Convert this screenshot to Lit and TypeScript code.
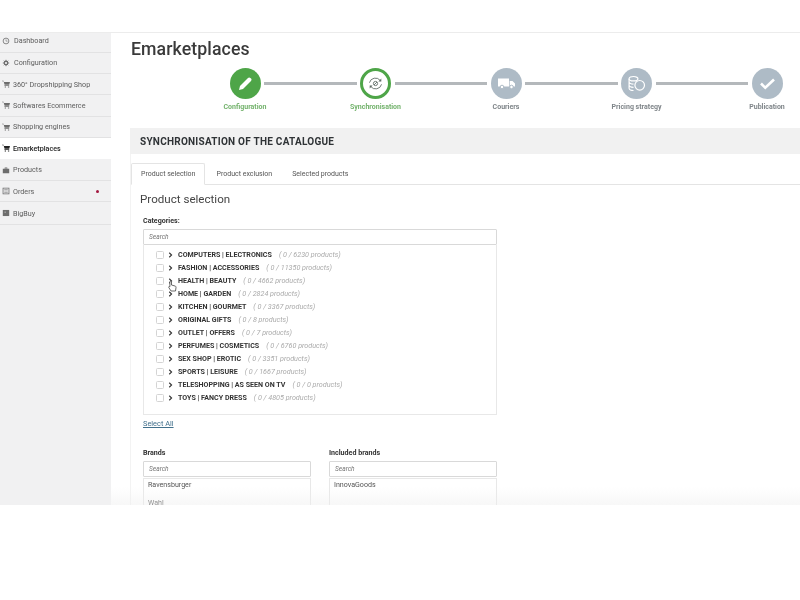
import { LitElement, html, css, svg } from "lit";
import { customElement } from "lit/decorators.js";

const cart = svg`<path d="M0 1h2l.6 1.400H10L9 6H3.200L2 1.600H0z M3 6.600h6v1H3z M3.400 8h1.600v1.400H3.400z M7.400 8H9v1.400H7.400z"/>`;
const navIcons: Record<string, unknown> = {
  clock: svg`<circle cx="5" cy="5" r="3.600" fill="none" stroke="currentColor" stroke-width="1"/><path d="M5 3v2.200h2" fill="none" stroke="currentColor" stroke-width=".7"/>`,
  gear: svg`<circle cx="5" cy="5" r="2.200" fill="none" stroke="currentColor" stroke-width="1.600"/><path d="M5 1v1.400M5 7.600V9M1 5h1.400M7.600 5H9M2.200 2.200l1 1M6.800 6.800l1 1M7.800 2.200l-1 1M3.200 6.800l-1 1" stroke="currentColor" stroke-width="1.100"/>`,
  cart,
  bag: svg`<path d="M1 3.400h8V9H1z M3.400 3.400V2h3.200v1.400h-.8v-.7H4.200v.7z"/>`,
  list: svg`<path fill-rule="evenodd" d="M.8 1h8.400v8H.8z M1.800 2v6h6.400V2z"/><path d="M2.800 3h4.400v.8H2.800z M2.800 4.600h4.400v.8H2.800z M2.800 6.200h4.400v.8H2.800z"/>`,
  box: svg`<path d="M1 1.200h8v7.600H1z"/><path d="M3 3h2v2H3z" fill="#999"/>`,
};

const nav: [string, string, boolean?, boolean?][] = [
  ["Dashboard", "clock"],
  ["Configuration", "gear"],
  ["360° Dropshipping Shop", "cart"],
  ["Softwares Ecommerce", "cart"],
  ["Shopping engines", "cart"],
  ["Emarketplaces", "cart", true],
  ["Products", "bag"],
  ["Orders", "list", false, true],
  ["BigBuy", "box"],
];

const steps: [string, string, unknown][] = [
  ["Configuration", "done", svg`<path d="M-6.500 6.500l1-4L2.500-5.500c.7-.7 1.700-.7 2.400 0l.6.600c.7.700.7 1.700 0 2.400L-2.500 5.500z" fill="#fff"/>`],
  ["Synchronisation", "current", svg`<g fill="none" stroke="#5f6b66" stroke-width="1.100"><path d="M-7.500-1A7.600 7.600 0 0 1 6-3.600M7.500 1A7.600 7.600 0 0 1-6 3.600"/><circle r="2.600"/><path d="M-1.800 1.800l3.600-3.600"/></g><path d="M7.200-6.200v3.600H3.600zM-7.200 6.200V2.600h3.600z" fill="#5f6b66"/>`],
  ["Couriers", "todo", svg`<path d="M-8.500-5H2.500v8h-11zM3.200-2.500h2.800L8.500 0v3H3.200z" fill="#fff"/><circle cx="-4.500" cy="3.500" r="1.800" fill="#fff" stroke="#aebbc6"/><circle cx="5" cy="3.500" r="1.800" fill="#fff" stroke="#aebbc6"/>`],
  ["Pricing strategy", "todo", svg`<g fill="none" stroke="#fff" stroke-width="1.200"><ellipse cx="-3" cy="-4.800" rx="4.400" ry="2.200"/><path d="M-7.400-4.800V4.800c0 1.200 2 2.200 4.400 2.200M-7.400-1.600c0 1.200 2 2.200 4.400 2.200M-7.400 1.600c0 1.200 2 2.200 4.400 2.200"/><circle cx="3.200" cy="1.800" r="4.800"/></g>`],
  ["Publication", "todo", svg`<path d="M-6.500 0l4.300 4.300L6.500-4" fill="none" stroke="#fff" stroke-width="2.600"/>`],
];

const cats: [string, string][] = [
  ["COMPUTERS | ELECTRONICS", "( 0 / 6230 products)"],
  ["FASHION | ACCESSORIES", "( 0 / 11350 products)"],
  ["HEALTH | BEAUTY", "( 0 / 4662 products)"],
  ["HOME | GARDEN", "( 0 / 2824 products)"],
  ["KITCHEN | GOURMET", "( 0 / 3367 products)"],
  ["ORIGINAL GIFTS", "( 0 / 8 products)"],
  ["OUTLET | OFFERS", "( 0 / 7 products)"],
  ["PERFUMES | COSMETICS", "( 0 / 6760 products)"],
  ["SEX SHOP | EROTIC", "( 0 / 3351 products)"],
  ["SPORTS | LEISURE", "( 0 / 1667 products)"],
  ["TELESHOPPING | AS SEEN ON TV", "( 0 / 0 products)"],
  ["TOYS | FANCY DRESS", "( 0 / 4805 products)"],
];

@customElement("app-root")
export class AppRoot extends LitElement {
  static styles = css`
    :host { display: block; width: 800px; height: 600px; background: #fff; font-family: Roboto, "Liberation Sans", sans-serif; color: #333; overflow: hidden; }
    .screen { position: relative; height: 505px; overflow: hidden; display: flex; flex-direction: column; background: #fff; filter: blur(.35px); }
    .top { height: 33px; flex: none; box-sizing: border-box; border-bottom: 1px solid #ececec; }
    .body { flex: 1; min-height: 0; display: flex; }
    .fade { position: absolute; left: 111px; right: 0; bottom: 0; height: 18px; background: linear-gradient(rgba(240,240,240,0), rgba(238,238,238,.45)); pointer-events: none; }
    .side { width: 111px; flex: none; background: #f1f1f2; }
    .nav { height: 21.400px; box-sizing: border-box; border-bottom: 1px solid #e2e2e3; display: flex; align-items: center; font-size: 7.200px; color: #5c5c5c; padding-left: 2px; gap: 3px; position: relative; }
    .nav:first-child { height: 19.500px; padding-bottom: 3px; }
    .nav:last-child { height: 22.800px; }
    .nav svg { width: 8px; height: 8px; fill: #6d6d6d; color: #6d6d6d; flex: none; }
    .nav.wide { gap: 4px; }
    .nav.on { background: #fff; color: #222; font-weight: 500; border-bottom-color: #fff; }
    .nav.on svg { fill: #222; }
    .dot { position: absolute; left: 96px; top: 9px; width: 3px; height: 3px; border-radius: 50%; background: #a3183f; }
    .main { flex: 1; min-width: 0; padding: 6px 0 0 19px; }
    h1 { margin: 0 0 0 1px; font-size: 17.700px; font-weight: 500; color: #3a3a3a; line-height: 20px; letter-spacing: .1px; }
    .stepper { display: flex; margin: 9px 0 0 99px; width: 554px; height: 50px; align-items: flex-start; }
    .step { width: 32px; flex: none; display: flex; flex-direction: column; align-items: center; }
    .circle { width: 31px; height: 31px; border-radius: 50%; box-sizing: border-box; display: block; flex: none; }
    .step.done .circle { background: #4ea548; }
    .step.current .circle { background: #fff; border: 3px solid #4ea548; }
    .step.todo .circle { background: #aebbc6; }
    .step svg { width: 100%; height: 100%; display: block; overflow: visible; }
    .lbl { font-size: 7px; font-weight: 700; margin-top: 4px; white-space: nowrap; color: #7f8589; }
    .done .lbl, .current .lbl { color: #74b36d; }
    .line { flex: 1; height: 2.500px; background: #b4b8bb; margin: 14px 3px 0; }
    .band { height: 26px; background: #f1f1f1; margin-top: 10px; display: flex; align-items: center; padding-left: 10px; font-size: 10px; font-weight: 700; color: #2f3336; letter-spacing: .25px; }
    .panel { border-left: 1px solid #f3f3f3; height: 400px; }
    .tabs { display: flex; height: 21px; padding-top: 9px; border-bottom: 1px solid #e4e4e4; font-size: 7px; color: #555; }
    .tab { display: flex; align-items: center; padding: 0 11px 0 0; margin-left: 11px; white-space: nowrap; }
    .tab.on { margin-left: 0; padding: 0 9px; border: 1px solid #e4e4e4; border-bottom: 1px solid #fff; height: 22px; border-radius: 2px 2px 0 0; background: #fff; box-sizing: border-box; }
    .tab.sec { margin-left: 9px; }
    h2 { margin: 7px 0 0 9px; font-size: 11.600px; font-weight: 400; line-height: 14px; color: #444; }
    .form { margin: 10px 0 0 12px; width: 354px; }
    label { display: block; font-size: 7.100px; font-weight: 700; color: #333; line-height: 10px; }
    .search { height: 16px; margin-top: 3px; box-sizing: border-box; border: 1px solid #d9d9d9; border-radius: 1px; font-size: 6.600px; font-style: italic; color: #777; padding-left: 5px; display: flex; align-items: center; background: #fff; }
    .tree { height: 170px; box-sizing: border-box; border: 1px solid #e8e8e8; border-top: 0; padding-top: 3px; }
    .row { height: 13px; display: flex; align-items: center; padding-left: 12px; }
    .cb { width: 6px; height: 6px; border: 1px solid #d4d4d4; border-radius: 1.500px; flex: none; background: #fff; }
    .chev { width: 5px; height: 6px; margin: 0 5px 0 4px; flex: none; fill: none; stroke: #333; stroke-width: 1.300; }
    .name { font-size: 7.100px; font-weight: 700; color: #333; white-space: nowrap; }
    .count { font-size: 7.200px; font-style: italic; color: #aaa; margin-left: 7px; white-space: nowrap; }
    .sel { display: block; font-size: 7.400px; color: #42708c; text-decoration: underline; margin-top: 4px; line-height: 10px; }
    .two { display: grid; grid-template-columns: 168px 168px; column-gap: 18px; margin-top: 19px; }
    .list { height: 60px; border: 1px solid #e8e8e8; margin-top: 1px; padding: 0 4px; box-sizing: border-box; font-size: 7.100px; color: #555; }
    .list span { display: block; height: 18px; line-height: 12px; }
    .cursor { position: absolute; left: 168px; top: 280px; width: 9px; height: 12px; }
  `;

  render() {
    return html`<div class="screen">
      <div class="top"></div>
      <div class="body">
        <aside class="side">
          ${nav.map(([t, i, on, dot]) => html`<div class="nav ${on ? "on" : ""} ${i === "clock" || i === "gear" ? "wide" : ""}">
            <svg viewBox="0 0 10 10">${navIcons[i]}</svg>${t}${dot ? html`<span class="dot"></span>` : ""}
          </div>`)}
        </aside>
        <main class="main">
          <h1>Emarketplaces</h1>
          <div class="stepper">
            ${steps.map(([t, s, ic], i) => html`${i ? html`<div class="line"></div>` : ""}<div class="step ${s}">
              <span class="circle"><svg viewBox="-15.500 -15.500 31 31">${ic}</svg></span>
              <span class="lbl">${t}</span>
            </div>`)}
          </div>
          <div class="band">SYNCHRONISATION OF THE CATALOGUE</div>
          <div class="panel">
            <div class="tabs">
              <div class="tab on">Product selection</div>
              <div class="tab">Product exclusion</div>
              <div class="tab sec">Selected products</div>
            </div>
            <h2>Product selection</h2>
            <div class="form">
              <label>Categories:</label>
              <div class="search">Search</div>
              <div class="tree">
                ${cats.map(([n, c]) => html`<div class="row"><span class="cb"></span>
                  <svg class="chev" viewBox="0 0 6 7"><path d="M1.500 .8L4.300 3.500 1.500 6.200"/></svg>
                  <span class="name">${n}</span><span class="count">${c}</span></div>`)}
              </div>
              <a class="sel">Select All</a>
              <div class="two">
                <div><label>Brands</label><div class="search">Search</div><div class="list"><span>Ravensburger</span><span>Wahl</span></div></div>
                <div><label>Included brands</label><div class="search">Search</div><div class="list"><span>InnovaGoods</span></div></div>
              </div>
            </div>
          </div>
        </main>
      </div>
      <svg class="cursor" viewBox="0 0 9 12"><path d="M2.500 1c.7 0 1 .4 1 1v3l3.500 1c.8.300 1.200.8 1 1.600L7.500 11H3L.8 7.500c-.4-.8.400-1.400 1.100-.8V2c0-.6.100-1 .6-1z" fill="#fff" stroke="#444" stroke-width=".8"/></svg>
      <div class="fade"></div>
    </div>`;
  }
}
